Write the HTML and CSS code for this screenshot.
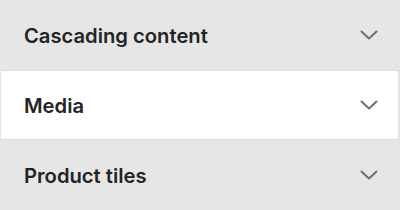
FILE: index.html
```html
<!DOCTYPE html>
<html>
<head>
<meta charset="utf-8">
<link rel="stylesheet" href="styles.css">
</head>
<body>
<div class="list">
  <div class="row">
    <span class="label">Cascading content</span>
    <svg class="chev" width="18" height="10" viewBox="0 0 18 10"><path d="M1.5 1.5 L9 8.5 L16.5 1.5" fill="none" stroke="#6f6f6f" stroke-width="2" stroke-linecap="round" stroke-linejoin="round"/></svg>
  </div>
  <div class="row active">
    <span class="label">Media</span>
    <svg class="chev" width="18" height="10" viewBox="0 0 18 10"><path d="M1.5 1.5 L9 8.5 L16.5 1.5" fill="none" stroke="#6f6f6f" stroke-width="2" stroke-linecap="round" stroke-linejoin="round"/></svg>
  </div>
  <div class="row">
    <span class="label">Product tiles</span>
    <svg class="chev" width="18" height="10" viewBox="0 0 18 10"><path d="M1.5 1.5 L9 8.5 L16.5 1.5" fill="none" stroke="#6f6f6f" stroke-width="2" stroke-linecap="round" stroke-linejoin="round"/></svg>
  </div>
</div>
</body>
</html>
```
FILE: styles.css
```css
html, body {
  margin: 0;
  padding: 0;
  background: #e6e6e6;
}
.list {
  display: flex;
  flex-direction: column;
  width: 400px;
}
.row {
  box-sizing: border-box;
  height: 70px;
  display: flex;
  align-items: center;
  justify-content: space-between;
  padding: 0 22px 0 24px;
  background: #e6e6e6;
  font-family: Inter, "Noto Sans", sans-serif;
  font-weight: 600;
  font-size: 20.2px;
  color: #242424;
}
.row.active {
  background: #ffffff;
  border-top: 1px solid #dcdcdc;
  border-bottom: 1px solid #dcdcdc;
  border-left: 1px solid #e2e2e2;
  border-right: 2px solid #e2e2e2;
  padding-left: 23px;
  padding-right: 20px;
}
.label {
  letter-spacing: 0;
}
.chev {
  display: block;
}
```
